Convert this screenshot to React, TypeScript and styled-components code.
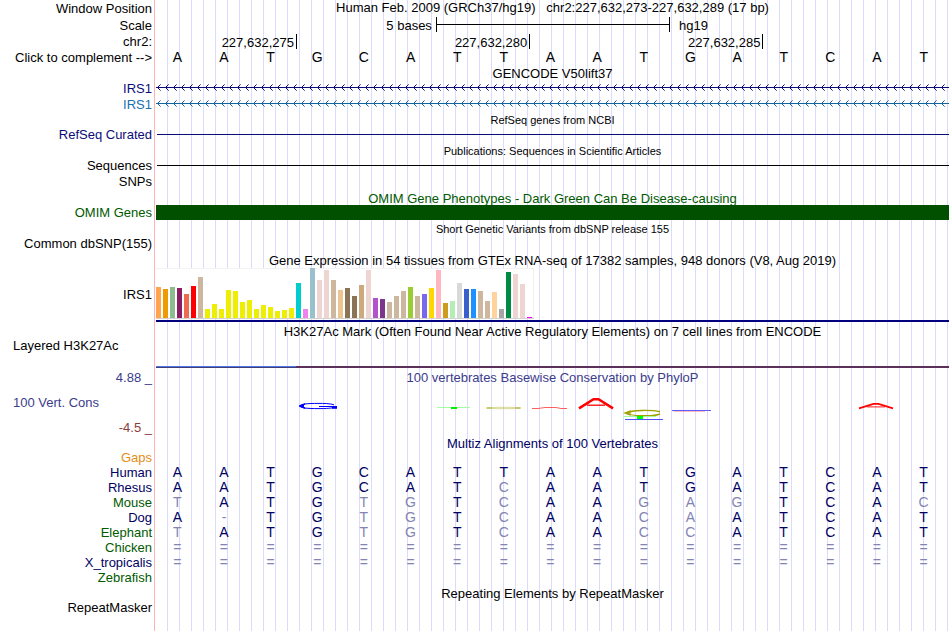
import React from "react";
import styled, { createGlobalStyle } from "styled-components";

const GlobalStyle = createGlobalStyle`
  body {
    margin: 0;
    background: #fff;
  }
`;

const NAVY = "#0c0c78";
const ALIGN = "#000064";
const GREEN = "#005a00";
const PHYLO = "#3c3c8c";

const Browser = styled.main`
  display: flex;
  flex-direction: column;
  box-sizing: border-box;
  min-height: 100vh;
  padding-right: 1px;
  font-family: "Liberation Sans", Arial, sans-serif;
  font-size: 13px;
  line-height: 15px;
  color: #000;
  background:
    linear-gradient(#ffb4b4, #ffb4b4) 154px 0 / 1px 100% no-repeat,
    linear-gradient(#fff, #fff) 0 0 / 156px 100% no-repeat,
    linear-gradient(to right, transparent 11px, #dcdcfa 11px) 156px 0 / 12px 100%;
`;

const Row = styled.div<{ $h: number }>`
  display: grid;
  grid-template-columns: 152px minmax(0, 1fr);
  column-gap: 4px;
  height: ${(p) => p.$h}px;
`;

const Label = styled.div<{ $color?: string; $left?: boolean }>`
  align-self: center;
  text-align: ${(p) => (p.$left ? "left" : "right")};
  padding-left: ${(p) => (p.$left ? 13 : 0)}px;
  color: ${(p) => p.$color || "#000"};
  white-space: nowrap;
`;

const ComplementButton = styled.button`
  justify-self: end;
  padding: 0;
  border: 0;
  background: none;
  font: inherit;
  color: inherit;
  white-space: nowrap;
  cursor: pointer;
`;

const Heading = styled.div<{ $color?: string }>`
  text-align: center;
  color: ${(p) => p.$color || "#000"};
  white-space: pre;
`;

const Title = styled(Heading)<{ $small?: boolean }>`
  grid-column: 2;
  align-self: end;
  margin-bottom: -1px;
  font-size: ${(p) => (p.$small ? 11 : 13)}px;
`;

const Columns = styled.div`
  display: grid;
  grid-template-columns: repeat(17, minmax(0, 1fr));
`;

const ScaleText = styled.span<{ $cols: string; $end?: boolean }>`
  grid-column: ${(p) => p.$cols};
  align-self: center;
  text-align: ${(p) => (p.$end ? "right" : "left")};
  padding: ${(p) => (p.$end ? "0 4px 0 0" : "0 0 0 10px")};
`;

const ScaleBar = styled.span`
  grid-column: 7 / 12;
  height: 15px;
  margin-right: -1px;
  border: solid #000;
  border-width: 0 1px;
  background: linear-gradient(#000, #000) 0 7px / 100% 1px no-repeat;
`;

const Coordinate = styled.span<{ $cols: string }>`
  grid-column: ${(p) => p.$cols};
  height: 15px;
  margin: 1px -1px 0 0;
  padding-right: 2px;
  border-right: 1px solid #000;
  text-align: right;
  line-height: 17px;
`;

const Base = styled.span`
  padding-right: 4px;
  text-align: center;
  font-size: 14px;
`;

const Line = styled.div<{ $color: string }>`
  height: 1px;
  margin: 7px 0 0 1px;
  background: ${(p) => p.$color};
`;

const OmimBar = styled.div`
  height: 15px;
  background: #005000;
`;

const ExpressionTrack = styled.div`
  align-self: end;
  padding-bottom: 1px;
  border-bottom: 2px solid #000080;
`;

const ExpressionChart = styled.div`
  display: flex;
  align-items: flex-end;
  gap: 2px;
  box-sizing: border-box;
  width: 378px;
  height: 51px;
  background: #fff;
  border-bottom: 1px solid #d2d2d2;
  box-shadow: inset 0 1px #f2f2f2, inset -1px 0 #f2f2f2;
`;

const Bar = styled.span`
  width: 5px;
`;

const MarkSignal = styled.div`
  grid-column: 2;
  align-self: end;
  height: 2px;
  background:
    linear-gradient(to right, #5078dc 140px, #5c3058 140px) 0 0 / 100% 1px no-repeat,
    linear-gradient(to right, #403c80 140px, #5c3058 140px);
`;

const ConservationLabels = styled.div`
  display: grid;
  grid-template-rows: 18px 1fr 18px;
`;

const ConservationBody = styled.div`
  display: grid;
  grid-template-columns: minmax(0, 1fr);
  grid-template-rows: 15px 50px;
  row-gap: 1px;
  padding-top: 2px;
`;

const Mark = styled.svg`
  display: block;
  width: 46px;
  height: 50px;
  overflow: visible;
`;

const AlignmentTable = styled.table`
  width: 100%;
  table-layout: fixed;
  border-collapse: collapse;
`;

const Species = styled.th<{ $color: string }>`
  width: 152px;
  height: 15px;
  padding: 0 4px 0 0;
  text-align: right;
  font-weight: normal;
  line-height: 15px;
  color: ${(p) => p.$color};
`;

const AlignedBase = styled.td<{ $faded: boolean }>`
  height: 15px;
  padding: 0 4px 0 0;
  text-align: center;
  font-size: 14px;
  line-height: 15px;
  color: ${(p) => (p.$faded ? "#8484b4" : ALIGN)};
`;

const REFERENCE = "AATGCATTAATGATCAT";

const SPECIES = [
  { name: "Gaps", color: "#e68c14", bases: "" },
  { name: "Human", color: ALIGN, bases: REFERENCE },
  { name: "Rhesus", color: ALIGN, bases: "AATGCATCAATGATCAT" },
  { name: "Mouse", color: GREEN, bases: "TATGTGTCAAGAGTCAC" },
  { name: "Dog", color: ALIGN, bases: "A-TGTGTCAACAATCAT" },
  { name: "Elephant", color: GREEN, bases: "TATGTGTCAACCATCAT" },
  { name: "Chicken", color: GREEN, bases: "=================" },
  { name: "X_tropicalis", color: ALIGN, bases: "=================" },
  { name: "Zebrafish", color: GREEN, bases: "" },
];

const TISSUES: [number, string][] = [
  [31, "#ffa54f"], [29, "#ee9a00"], [31, "#8fbc8f"], [30, "#8b1c62"], [24, "#ee6a50"], [32, "#ff0000"],
  [41, "#cdb79e"], [9, "#eeee00"], [14, "#eeee00"], [9, "#eeee00"], [28, "#eeee00"], [27, "#eeee00"],
  [16, "#eeee00"], [18, "#eeee00"], [9, "#eeee00"], [13, "#eeee00"], [11, "#eeee00"], [7, "#eeee00"],
  [8, "#eeee00"], [10, "#eeee00"], [35, "#00cdcd"], [9, "#ee82ee"], [50, "#9ac0cd"], [38, "#eed5d2"],
  [48, "#eed5d2"], [38, "#cdb79e"], [28, "#eec591"], [30, "#8b7355"], [22, "#8b7355"], [33, "#cdaa7d"],
  [48, "#eed5d2"], [20, "#b452cd"], [19, "#7a378b"], [16, "#cdb79e"], [22, "#cdb79e"], [27, "#cdb79e"],
  [31, "#9acd32"], [22, "#cdb79e"], [24, "#7a67ee"], [30, "#ffd700"], [48, "#ffb6c1"], [15, "#cd9b1d"],
  [17, "#b4eeb4"], [35, "#d9d9d9"], [29, "#3a5fcd"], [29, "#1e90ff"], [27, "#cdb79e"], [17, "#cdb79e"],
  [26, "#ffd39b"], [9, "#a6a6a6"], [46, "#008b45"], [44, "#eed5d2"], [34, "#eed5d2"], [1, "#ff00ff"],
];

/* Conservation marks, keyed by base column. */
const MARKS: Record<number, React.ReactNode> = {
  3: (
    <g fill="none" stroke="#0000ff">
      <path d="M38 18.8C34 17.4 28 17.4 22 17.4C12 17.4 4 18 4 20C4 22 12 22.6 22 22.6C30 22.6 37 22.4 40 20.5" />
      <path d="M9 17.8L3 20L9 22.4L7 20Z" fill="#0000ff" />
      <path d="M23 20.5H41" />
      <path d="M36 21.5H41" strokeWidth="2.6" />
    </g>
  ),
  6: (
    <g>
      <path d="M1 21.5H34" stroke="#a0ffa0" />
      <path d="M15 22H21" stroke="#00f000" strokeWidth="2" />
    </g>
  ),
  7: (
    <g fill="none" stroke="#a0a000">
      <ellipse cx="21" cy="22" rx="17" ry="0.7" strokeWidth="0.6" opacity="0.7" />
      <path d="M3 22H8M33 22H37" opacity="0.6" />
    </g>
  ),
  8: (
    <g fill="none" stroke="#ff2020">
      <path d="M3 22.5H9L16 21.5H27L32 22.5H38" strokeWidth="0.9" opacity="0.8" />
    </g>
  ),
  9: (
    <g fill="none" stroke="#ff0000">
      <path d="M3 22.4L17.5 13.2H22.5L37 22.4" strokeWidth="2.6" />
      <path d="M11 19.2H29" strokeWidth="1.3" />
    </g>
  ),
  10: (
    <g fill="none" stroke="#a0a000">
      <path d="M38 25.8C30 23.8 9 23.8 5 27C7 30.2 32 30.8 38 28" strokeWidth="1.4" />
      <path d="M9 25.2L4 27L9 28.8" strokeWidth="2" />
      <path d="M1 30.5H34" stroke="#a0ffa0" />
      <path d="M15 31.5H21" stroke="#00ff00" strokeWidth="3" />
      <path d="M3 33.5H41" stroke="#5050ff" />
    </g>
  ),
  11: (
    <g>
      <path d="M5 25.5H36" stroke="#ff9090" strokeWidth="0.6" />
      <path d="M3 24.5H42" stroke="#5c5cff" />
    </g>
  ),
  15: (
    <g fill="none" stroke="#ff0000">
      <path d="M3 22.4L17.5 17.8H22.5L37 22.4" strokeWidth="1.8" />
      <path d="M11 20.9H29" strokeWidth="0.9" />
    </g>
  ),
};

function GeneLine({ id, color }: { id: string; color: string }) {
  return (
    <svg width="100%" height="16" aria-hidden="true">
      <defs>
        <pattern id={id} width="8" height="16" patternUnits="userSpaceOnUse">
          <path
            d="M0 7h8v1h-8zM2 6h1v1h-1zM2 8h1v1h-1zM3 5h1v1h-1zM3 9h1v1h-1z"
            fill={color}
          />
          <path d="M4 4h1v1h-1zM4 10h1v1h-1z" fill={color} opacity="0.6" />
        </pattern>
      </defs>
      <rect width="100%" height="16" fill={`url(#${id})`} />
    </svg>
  );
}

export default function App() {
  return (
    <>
      <GlobalStyle />
      <Browser>
        <Row $h={17}>
          <Label>Window Position</Label>
          <Heading>{"Human Feb. 2009 (GRCh37/hg19)   chr2:227,632,273-227,632,289 (17 bp)"}</Heading>
        </Row>
        <Row $h={16}>
          <Label>Scale</Label>
          <Columns>
            <ScaleText $cols="1 / 7" $end>5 bases</ScaleText>
            <ScaleBar />
            <ScaleText $cols="12 / 15">hg19</ScaleText>
          </Columns>
        </Row>
        <Row $h={17}>
          <Label>chr2:</Label>
          <Columns>
            <Coordinate $cols="1 / 4">227,632,275</Coordinate>
            <Coordinate $cols="4 / 9">227,632,280</Coordinate>
            <Coordinate $cols="9 / 14">227,632,285</Coordinate>
          </Columns>
        </Row>
        <Row $h={15}>
          <ComplementButton type="button">Click to complement --&gt;</ComplementButton>
          <Columns>
            {REFERENCE.split("").map((base, i) => (
              <Base key={i}>{base}</Base>
            ))}
          </Columns>
        </Row>

        <Row $h={15}><Title>GENCODE V50lift37</Title></Row>
        <Row $h={16}>
          <Label $color={NAVY}>IRS1</Label>
          <GeneLine id="coding" color={NAVY} />
        </Row>
        <Row $h={16}>
          <Label $color="#1a6fae">IRS1</Label>
          <GeneLine id="transcript" color="#1464a0" />
        </Row>

        <Row $h={15}><Title $small>RefSeq genes from NCBI</Title></Row>
        <Row $h={15}>
          <Label $color={NAVY}>RefSeq Curated</Label>
          <Line $color={NAVY} />
        </Row>

        <Row $h={16}><Title $small>Publications: Sequences in Scientific Articles</Title></Row>
        <Row $h={15}>
          <Label>Sequences</Label>
          <Line $color="#000" />
        </Row>
        <Row $h={16}><Label>SNPs</Label></Row>

        <Row $h={16}>
          <Title $color={GREEN}>OMIM Gene Phenotypes - Dark Green Can Be Disease-causing</Title>
        </Row>
        <Row $h={15}>
          <Label $color={GREEN}>OMIM Genes</Label>
          <OmimBar />
        </Row>

        <Row $h={16}><Title $small>Short Genetic Variants from dbSNP release 155</Title></Row>
        <Row $h={15}><Label>Common dbSNP(155)</Label></Row>

        <Row $h={16}>
          <Title>Gene Expression in 54 tissues from GTEx RNA-seq of 17382 samples, 948 donors (V8, Aug 2019)</Title>
        </Row>
        <Row $h={55}>
          <Label>IRS1</Label>
          <ExpressionTrack>
            <ExpressionChart>
              {TISSUES.map(([height, color], i) => (
                <Bar key={i} style={{ height, background: color }} />
              ))}
            </ExpressionChart>
          </ExpressionTrack>
        </Row>

        <Row $h={16}>
          <Title>H3K27Ac Mark (Often Found Near Active Regulatory Elements) on 7 cell lines from ENCODE</Title>
        </Row>
        <Row $h={15}><Label $left>Layered H3K27Ac</Label></Row>
        <Row $h={15}><MarkSignal /></Row>

        <Row $h={68}>
          <ConservationLabels>
            <Label $color={PHYLO}>4.88 _</Label>
            <Label $left $color={PHYLO}>100 Vert. Cons</Label>
            <Label $color="#8c3c3c">-4.5 _</Label>
          </ConservationLabels>
          <ConservationBody>
            <Heading $color={PHYLO}>100 vertebrates Basewise Conservation by PhyloP</Heading>
            <Columns>
              {REFERENCE.split("").map((_, i) => (
                <div key={i}>
                  {MARKS[i] && <Mark viewBox="0 0 46 50" aria-hidden="true">{MARKS[i]}</Mark>}
                </div>
              ))}
            </Columns>
          </ConservationBody>
        </Row>

        <Row $h={14}><Title $color={ALIGN}>Multiz Alignments of 100 Vertebrates</Title></Row>
        <AlignmentTable>
          <tbody>
            {SPECIES.map(({ name, color, bases }) => (
              <tr key={name}>
                <Species scope="row" $color={color}>{name}</Species>
                {REFERENCE.split("").map((ref, i) => (
                  <AlignedBase key={i} $faded={bases[i] !== ref}>{bases[i] || ""}</AlignedBase>
                ))}
              </tr>
            ))}
          </tbody>
        </AlignmentTable>

        <Row $h={15}><Title>Repeating Elements by RepeatMasker</Title></Row>
        <Row $h={15}><Label>RepeatMasker</Label></Row>
      </Browser>
    </>
  );
}
